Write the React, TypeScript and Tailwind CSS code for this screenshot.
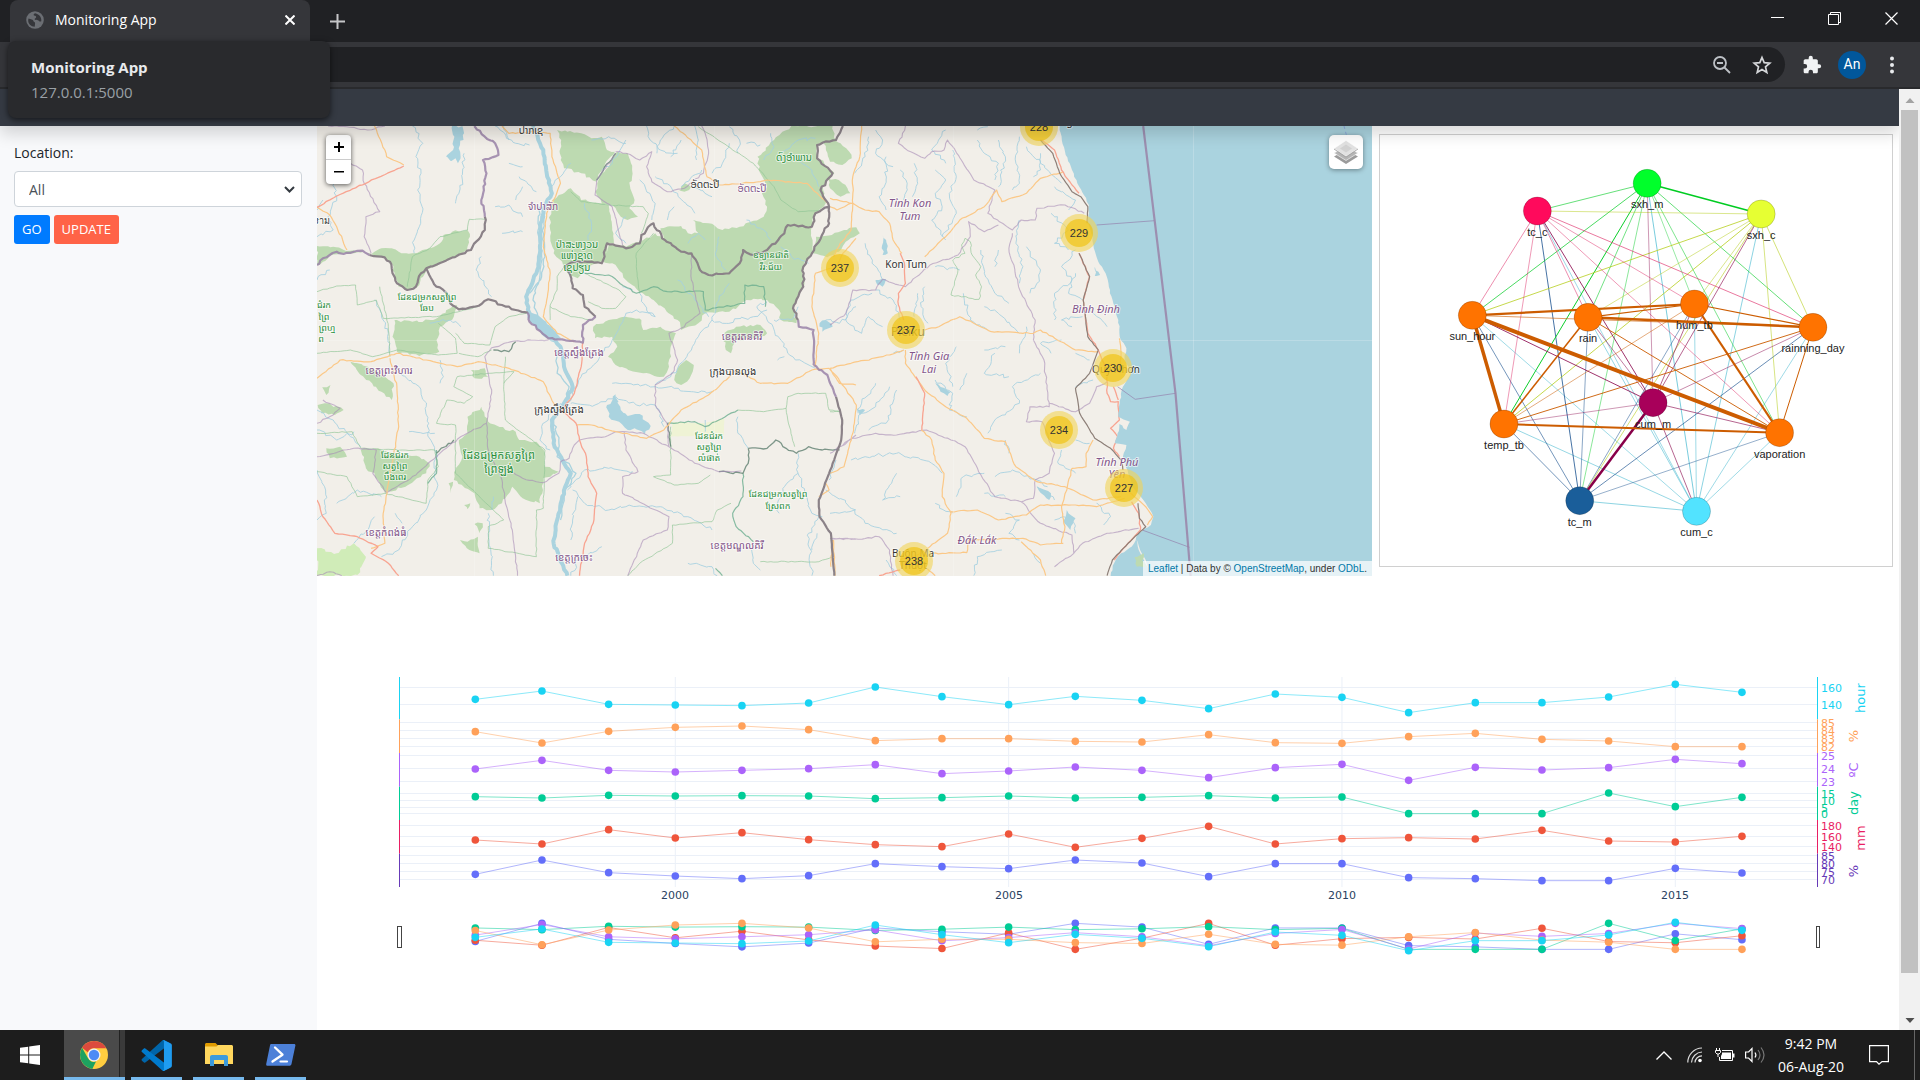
import React from "react";

/* ---------- map geometry ---------- */

type Side = "L" | "R";

// Converts a traced point to the map's own 1056 x 450 space.
const toMap = (side: Side, x: number, y: number): [number, number] =>
  side === "L" ? [x / 2.9037 - 1, y / 3 - 6] : [x / 2.851 + 513, y / 3 - 6];

let seed = 7;
const rnd = () => {
  seed = (seed * 16807) % 2147483647;
  return seed / 2147483647 - 0.5;
};

// Turns a list of points into a path, roughened so that borders and rivers meander.
const trace = (side: Side, pts: string, amp = 1.6, close = false) => {
  let p = pts.trim().split(/\s+/).map((s) => {
    const [x, y] = s.split(",").map(Number);
    return toMap(side, x, y);
  });
  if (close) p = [...p, p[0]];
  if (amp > 0) {
    const out: [number, number][] = [p[0]];
    for (let i = 1; i < p.length; i++) {
      const [x0, y0] = p[i - 1];
      const [x1, y1] = p[i];
      const len = Math.hypot(x1 - x0, y1 - y0);
      const n = Math.max(1, Math.round(len / 3.5));
      for (let k = 1; k < n; k++) {
        out.push([x0 + ((x1 - x0) * k) / n + rnd() * 2 * amp, y0 + ((y1 - y0) * k) / n + rnd() * 2 * amp]);
      }
      out.push(p[i]);
    }
    p = out;
  }
  return "M" + p.map(([x, y]) => `${x.toFixed(1)} ${y.toFixed(1)}`).join("L") + (close ? "Z" : "");
};

const many = (side: Side, list: string[], amp?: number, close?: boolean) =>
  list.map((l) => trace(side, l, amp, close)).join("");

const sea = trace(
  "R",
  "655,18 661,60 672,105 690,150 705,190 724,225 738,255 735,300 745,340 752,385 765,425 780,450 792,480 798,520 812,560 822,600 826,650 845,685 840,720 858,760 835,800 826,850 822,890 855,905 845,930 825,912 820,940 812,970 845,975 835,1010 850,1060 862,1100 900,1150 922,1190 915,1215 880,1240 860,1280 830,1300 810,1330 800,1368",
  0.7
) + "L1400 450L1400 0Z";

const forests =
  many("L", [
    "3,378 50,380 100,392 160,403 170,395 190,385 215,385 240,395 280,400 330,385 360,370 370,345 395,335 440,330 447,350 440,380 430,395 385,418 340,440 320,450 300,495 270,510 240,500 228,470 220,430 190,410 150,400 110,400 70,402 40,405 10,435 3,435",
    "700,30 730,35 770,40 800,55 830,50 845,90 868,95 840,130 815,185 770,160 720,145 708,100 712,60",
    "875,95 905,100 918,150 912,200 925,240 910,265 935,290 905,300 885,290 860,255 830,250 812,215 820,180 850,140",
    "680,250 705,225 740,205 770,240 850,255 860,330 865,370 845,375 835,425 800,435 780,450 760,475 735,465 720,440 715,425 690,400 680,330",
    "850,375 900,380 950,360 985,340 1010,355 1000,325 1060,318 1080,340 1110,340 1095,300 1140,310 1180,330 1230,320 1300,290 1310,260 1295,220 1310,200 1290,160 1282,110 1330,60 1380,18 1500,18 1510,60 1455,75 1455,110 1505,160 1470,200 1480,250 1450,280 1440,320 1440,400 1415,440 1415,500 1385,560 1395,610 1350,600 1345,570 1310,540 1250,540 1200,575 1130,580 1110,610 1060,630 1050,600 980,540 940,515 900,480 890,460 860,430 835,425",
    "228,600 280,605 340,600 390,565 410,555 400,590 360,620 350,660 358,695 300,708 235,695 222,650",
    "805,620 850,600 900,590 945,600 950,630 1000,620 1045,640 1030,680 1025,740 1010,770 950,760 870,735 848,710 875,680 860,650 810,655",
    "1050,745 1075,720 1097,735 1085,775 1060,795 1040,780",
    "1185,640 1220,620 1290,615 1310,640 1270,655 1220,660 1205,700 1190,690",
    "440,890 480,860 500,905 550,930 580,935 590,960 640,965 665,1000 665,1040 705,1055 660,1075 650,1150 600,1135 570,1100 540,1150 510,1170 475,1165 460,1120 400,1080 405,1050 425,1010 415,960 440,940",
    "130,990 180,985 250,1010 300,1010 330,1030 320,1060 260,1100 200,1120 170,1060 145,1045",
    "100,725 150,740 200,770 225,790 220,840 190,815 130,765",
    "30,985 70,980 90,1010 40,1015",
    "18,802 42,795 30,825",
    "418,1260 440,1265 470,1250 475,1300 445,1290",
    "460,1212 484,1210 475,1240",
    "430,1155 448,1150 440,1168",
    "385,1090 398,1085 390,1120",
    "5,855 30,850 80,870 55,885 15,880",
    "450,750 490,745 500,770 460,775",
    "1050,215 1070,190 1090,200 1070,215",
  ], 1.3, true) +
  many("R", [
    "-20,60 5,55 30,70 55,95 62,115 35,135 0,125",
    "-5,175 25,180 50,205 58,220 30,230 0,205",
    "5,345 40,330 75,322 85,340 45,365 25,395 -8,412 -50,400 -40,350",
  ], 1, true);

const borders = many("L", [
  "155,405 190,410 215,425 222,460 235,490 265,510 290,500 305,460 320,445 350,500 380,520 390,550 415,568 460,560 500,538 540,555 580,570 615,578",
  "812,590 780,560 775,525 745,505 738,465 722,440 750,425 830,430 845,370 900,385 940,370 945,345 980,310 1005,355 1060,395 1090,400 1115,450 1140,465 1200,460 1235,420 1240,390 1270,405 1310,390 1360,340 1370,315 1440,320 1450,280 1490,260 1465,210 1500,160 1455,115 1455,75 1510,60 1530,18",
  "320,445 370,425 450,390 490,330 490,290",
  "1490,260 1490,310 1440,400 1415,440 1415,500 1385,565 1400,600",
], 1.1) + trace("L", "1510,830 1528,900 1525,960 1490,1060 1460,1140 1462,1190 1495,1240 1505,1367", 0.3);

const purpleBorders =
  many("L", [
    "490,290 480,240 495,160 485,120 530,105 520,70 490,50 460,18",
    "615,578 620,605 675,655 775,668 775,615 812,590",
    "1400,600 1402,620 1445,630 1445,735",
    "1445,735 1485,765 1510,830",
    "3,435 20,415 40,405 60,395 80,402 110,395 135,392 155,405",
  ], 0.9) + trace("R", "893,18 925,295 985,820 1015,1200 1028,1368", 0);

const admin =
  many("L", [
    "100,130 135,150 140,190 185,275 145,290 140,350 160,400",
    "35,18 90,20 150,30 200,18",
    "870,95 900,100 940,120 975,95 960,140 975,185 1020,215 1070,205 1125,160 1140,100 1130,40 1120,18",
    "870,100 815,180 810,225 860,260 880,340 890,375",
    "510,683 490,710 500,760 510,820 495,910 430,945 370,990 290,1065 205,1118 165,1060 175,990 110,985 3,1010",
    "510,683 575,663 675,660",
    "495,910 500,990 540,1080 550,1150 570,1230 585,1367",
    "545,1045 600,1075 660,1088 705,1060 710,1025 735,1015 745,985 765,960 840,950 870,935 950,940 1025,980",
    "895,935 900,990 935,1055 890,1070 890,1120 1025,1190 1020,1230 950,1260 905,1367",
    "1090,400 1090,480 1115,580 1060,625 1025,640 1050,720 1035,760 985,795 985,855 1020,910 1025,980 1100,1030 1170,1055 1235,1053",
    "3,910 50,885 70,865 20,840",
    "3,1367 40,1355 75,1367",
    "1568,945 1530,975",
    "1500,1255 1568,1258",
  ], 0.7) +
  many("R", [
    "215,18 195,70 230,95 270,115 290,95 325,90 335,60 350,80 380,130 410,180 470,210 450,280 520,330 545,300 585,300 590,265 670,255 725,280",
    "480,315 440,335 395,305 400,350 365,405 285,435 215,500 150,478 130,510 65,510 45,580 0,615",
    "520,340 510,385 545,520 585,600 580,660 610,720 625,860 570,860 560,905 605,905 640,1000 625,1060 585,1080 580,1135 545,1145 470,1130 435,1075 410,1025 385,980 345,960 275,930 190,945 130,940 65,955 0,1000",
    "625,850 700,875 740,850 760,800 790,785",
    "545,1145 600,1210 690,1245 695,1300 640,1340",
    "695,1300 720,1270 790,1240 880,1225",
    "0,1255 80,1258 140,1250 170,1290 180,1367",
  ], 0.8);

const parks =
  many("L", [
    "490,298 445,298 440,330 360,350 330,385 280,410 265,500",
    "3,515 60,498 115,495 120,555 175,540 195,595 350,590 470,560",
    "3,700 100,690 165,710 235,690 355,705 410,700 405,655 355,610",
    "405,640 430,670 505,675 520,620 560,590 610,580",
    "415,700 470,710 510,690",
    "550,710 545,800 550,900 665,990 660,1165 640,1170 640,1310 500,1285 500,1220 545,1200 405,1060 405,915 350,910 380,840 430,850 455,830 400,800 410,770 500,760 575,755 545,790",
    "680,600 680,555 700,510 700,470 720,440",
    "680,560 740,590 805,600",
    "790,545 830,565 870,565 900,530 880,510 780,460",
    "980,340 930,400 930,440 940,520",
    "1110,20 1270,130 1330,200 1350,240 1400,275 1470,270",
    "740,215 770,245 850,255 950,260 965,280 945,340",
    "1030,920 1030,1065 980,1070 1040,1095 1110,1090 1145,1065",
    "905,1367 940,1330 1035,1270 1035,1215 1150,1205 1165,1170 1205,1150",
    "1225,870 1300,875 1365,865 1370,900 1390,980",
    "1365,865 1370,830 1400,820 1480,820 1490,870 1520,875",
    "1290,1325 1460,1325 1500,1310",
    "3,1055 90,1070 120,1130 200,1120 320,1150 325,1080 355,1040 345,990",
    "3,940 105,935 130,985 250,990 345,990",
    "215,710 210,620 185,500",
  ], 0.5) +
  many("R", ["385,355 400,365 405,405 430,440 415,465 432,500 425,538 345,525 355,485 365,450 350,420 385,400 375,375 385,355", "0,875 30,875"], 0.8);

const darkParks = many("L", [
  "1255,985 1310,985 1335,960 1365,985 1395,1000 1430,980 1470,990 1520,990",
  "1255,985 1255,1030 1240,1060 1170,1055",
  "515,690 560,695 580,665",
  "1020,910 1030,980",
  "870,100 815,180",
  "400,960 350,1000",
], 1);
const tealParks = many("L", [
  "1240,1060 1240,1130 1210,1180 1220,1220 1270,1265",
  "780,460 850,465 930,520 980,500 1020,515 1125,515 1130,570 1245,550 1245,495 1300,500 1305,560",
  "1020,910 1100,905 1130,920 1170,900 1225,870",
  "350,990 350,1060 325,1090",
  "1160,1345 1180,1367",
], 0.8);

const rivers =
  many("L", [
    "45,180 60,230 35,290 50,330 3,350",
    "280,18 310,70 290,110 305,160 295,210 308,260 300,320 285,360 285,400",
    "430,100 425,180 415,220 405,250",
    "520,18 580,70 620,75",
    "545,18 560,60", "960,18 970,60 1000,90 1050,100",
    "1100,18 1110,60 1105,120", "1060,60 1030,110", "1040,18 1000,60 990,100",
    "1120,150 1060,200", "1200,70 1180,130 1150,160", "1200,20 1230,60 1225,100",
    "1300,120 1330,80 1320,40", "900,60 880,95 860,130 830,150",
    "940,180 985,250 975,300", "985,170 1050,220 1100,280",
    "900,290 870,340 900,370", "1100,200 1150,230", "1250,70 1290,75",
    "480,410 465,450 510,530", "520,260 560,255 600,290", "540,340 600,335",
    "600,200 580,240", "590,170 640,215", "560,130 600,140",
    "1310,545 1280,560 1310,600 1350,660 1370,700 1450,745",
    "1310,570 1270,590 1180,610 1150,600 1110,650 1090,690 1070,720 1030,770 985,795",
    "1330,600 1380,600 1400,560", "1250,300 1300,330 1320,360", "1170,350 1160,400 1190,450",
    "1040,260 1020,300", "1080,370 1110,340 1130,360",
    "985,590 930,570 900,580 860,660 820,720 770,770 730,850",
    "940,520 960,570 985,590", "890,500 920,510",
    "1150,815 1090,815 1040,805 985,800 900,790 860,790",
    "985,855 930,855 870,830 810,855 740,850",
    "1010,920 1000,880 985,855",
    "655,920 650,960 680,990", "655,920 680,880 710,850",
    "230,740 245,760 300,800 320,860 325,940 350,1000 345,1060 350,1110 320,1170 280,1220 240,1290 190,1310",
    "215,700 210,640 190,580 170,540", "270,935 345,940",
    "3,870 50,900 100,950 130,980", "3,930 60,960 110,935",
    "3,1050 25,1100 30,1180 3,1200", "60,1150 120,1110 190,1130",
    "110,1270 150,1230 170,1190", "230,1180 250,1210",
    "360,720 370,770 360,790", "330,610 390,600 420,620",
    "730,1110 780,1050 850,1045 920,1055",
    "745,1110 780,1150 850,1170 900,1160 1000,1160 1080,1190 1150,1230",
    "760,1130 745,1200 740,1260", "740,1367 760,1320 830,1280",
    "500,1180 500,1240 515,1367", "510,1170 515,1130",
    "1225,890 1225,940 1255,985", "1400,1000 1400,1060 1420,1120 1440,1180 1470,1190",
    "1400,1060 1360,1100 1340,1150 1345,1180", "1460,1190 1430,1240 1440,1367", "1455,1240 1440,1290",
    "1480,1110 1568,1170", "1480,600 1520,610 1568,560",
    "1290,1350 1270,1330 1265,1290", "1130,900 1130,935", "1080,1330 1150,1340 1165,1367",
    "1340,720 1360,710", "1490,1080 1510,1020", "1400,120 1440,150 1460,200", "1350,100 1400,60 1450,55",
    "1200,490 1170,540 1150,600", "1050,480 1100,540 1140,590", "20,240 3,270", "3,480 40,450",
    "800,60 850,50 900,70", "740,130 710,170 680,200", "1430,430 1380,410 1350,380", "780,250 800,310 790,360",
  ], 1.7) +
  many("R", [
    "130,30 150,60 130,100 180,140", "110,50 100,110 70,160", "160,110 160,180 140,230 160,270",
    "200,150 220,190 210,240", "240,130 250,190 235,230", "300,150 330,180 300,220 320,260 290,300 330,360",
    "330,30 290,90 330,130", "350,90 360,170 340,220 360,280 320,350",
    "420,60 440,100 480,130 470,180", "480,60 500,110 480,200", "540,50 530,130 540,190 520,210",
    "560,80 600,130 660,190", "600,100 600,150 580,170", "420,30 450,20", "640,200 700,240 680,270",
    "540,300 530,370 550,440 540,490", "560,380 600,450 590,490 570,520",
    "630,280 680,330 640,370 680,390", "700,390 660,440 690,480 640,520 640,600",
    "700,460 680,520 720,540", "690,620 660,600 720,590", "430,390 440,460 470,520 510,550",
    "480,390 470,440", "300,440 370,450", "270,500 260,560 280,610", "150,480 120,430 100,370",
    "120,520 60,540 45,600 90,640 110,590 150,620", "200,600 180,540 130,510",
    "250,520 240,590", "380,520 400,600 450,630", "440,560 480,580 540,640",
    "470,700 440,760 510,770", "440,690 500,680", "560,620 540,700", "300,780 350,820 340,870 390,890",
    "360,680 330,730 350,800", "390,760 370,810", "170,800 130,860 90,880 70,940",
    "190,810 160,910 110,930", "130,790 90,850 80,880", "600,760 520,800 540,850 470,900 450,940",
    "630,700 600,670 660,660", "750,780 700,800", "660,990 650,1030 700,1060", "590,1100 640,1140",
    "0,1180 70,1170 100,1210 190,1240", "100,1010 190,1000 290,1030 320,1060",
    "100,1010 60,1020", "200,1130 150,1140 190,1060", "470,1070 520,1050 590,1080 620,1100",
    "440,1120 500,1130", "360,1130 380,1070 440,1060", "640,1200 690,1190 700,1240",
    "500,1180 540,1200 510,1240 540,1260", "410,1367 420,1310 490,1290", "350,1180 300,1150",
    "500,960 510,1000", "700,960 740,970", "760,1150 800,1190 780,1215", "190,1367 160,1320",
    "600,1330 580,1300", "180,700 210,690", "740,570 790,620", "700,700 740,720",
  ], 1.7);

const mekong = trace("L", "630,18 660,90 670,160 685,220 660,270 650,340 650,400 640,460 610,530 620,590 670,640 710,680 720,740 745,800 720,850 685,900 690,970 720,1030 740,1060 715,1130 700,1200 690,1270 730,1367", 0.9);
const mekongThin = many("L", [
  "650,260 645,330 655,400 650,470 630,540 650,600 700,640",
  "665,270 660,340 665,410 655,470 620,520",
  "700,690 700,760 735,800 720,850",
  "690,900 705,960 700,1010 735,1030 755,1060 720,1120 710,1200",
], 1.2);
const lakes =
  many("L", [
    "395,18 425,18 430,40 418,75 420,110 412,130 405,115 390,122 378,110 398,90 402,50",
    "845,855 870,823 885,870 905,888 940,882 972,918 955,942 925,925 905,930 880,905 850,890",
    "612,570 650,590 690,630 712,655 670,655 622,605",
    "1462,610 1480,600 1500,620 1470,635",
  ], 1.6, true) +
  many("R", [
    "150,345 160,360 165,400 150,405", "130,480 160,478 150,500 135,495", "300,790 345,815 335,828 315,815",
    "675,1170 700,1195 685,1230 668,1210", "590,1100 630,1120 625,1140 600,1118", "75,865 100,870 85,885",
    "755,440 770,465 755,468",
  ], 1.2, true);

const orangeRoads =
  many("L", [
    "170,18 200,90 205,110 255,135", "3,262 40,285 60,320 90,390",
    "540,18 560,40 640,35 680,40 685,110 710,190 690,240 670,280 660,380 680,460 670,540 660,590 700,640 750,665",
    "1040,18 1120,90 1135,170 1170,195 1290,185 1310,180 1425,190 1490,255",
    "3,775 70,720 160,725 235,700 320,720 410,740 470,725 560,745 660,785 690,850 720,880",
    "215,715 235,800 240,920 225,1010 210,1090 195,1180 200,1270 160,1285",
    "755,915 800,915 850,930 960,955 1010,930 1060,870 1130,830 1170,800 1220,750 1290,790 1370,790 1440,750 1490,745 1520,790 1568,795",
    "1568,355 1530,400 1510,440 1450,460 1440,560 1460,640 1450,740",
    "1460,1130 1490,1110 1480,1090", "1500,1260 1495,1340",
  ], 0.6) +
  many("R", [
    "90,18 85,110 65,170 65,250 60,330 25,380 10,410",
    "0,235 65,250 100,270 140,275 170,310 180,360 205,400",
    "0,260 20,270 60,250", "665,155 600,175 560,220 490,245 475,210 440,260 370,300 330,350 270,410",
    "270,630 310,620 370,590 410,610 460,635 580,640 600,630 700,690 765,695",
    "215,690 215,730 250,780 280,820 330,860 390,895 440,955 500,965 530,1040 590,1085 670,1100 750,1140 830,1130",
    "0,745 60,730 150,710 210,690", "0,745 40,800 75,855 65,940 40,1040 0,1060",
    "260,930 290,960 300,1020 325,1060 320,1130 345,1180 335,1240 260,1300 200,1320",
    "345,1175 420,1170 480,1200 560,1185 600,1155 700,1155 760,1160 840,1135",
    "690,1045 730,1040 730,1000 750,960", "690,1045 675,1110 660,1160 670,1220 660,1270",
    "290,1300 390,1298 395,1260 550,1255 600,1275 665,1270", "545,1265 600,1320 615,1367",
    "845,1110 900,1160 920,1190 905,1215", "825,655 830,700 825,750", "10,1260 15,1367", "270,1340 300,1367",
  ], 0.6);

const redRoads =
  many("L", [
    "3,262 60,228 255,138",
    "775,668 770,740 750,820 715,870 755,910 765,960 785,1010 790,1070 815,1120 805,1210 780,1270 765,1367",
    "3,1140 20,1190 55,1240 120,1250 180,1280 160,1300 210,1330 240,1367",
  ], 0.5) +
  many("R", [
    "605,60 640,90 660,150 690,195 710,220",
    "200,400 212,430 215,490 195,520 195,555 210,600",
    "245,770 270,820 262,930", "710,400 740,470 722,540 735,640 765,690 790,760 790,820 800,845 822,845 825,900 800,925 820,950 808,985 825,1010",
    "808,800 822,840", "860,1145 880,1180 885,1230 850,1270 810,1320", "140,1367 200,1350",
  ], 0.5);

const railway = many("R", [
  "600,60 635,100 655,160 690,215 715,230 735,260 733,310",
  "710,400 740,470 722,540 735,650 765,690",
  "765,690 740,760 700,805 712,880 755,955 800,985 830,1020 835,1050",
  "878,1150 882,1195 900,1220 850,1270 805,1320 790,1367",
], 0.3);

/* ---------- map labels ---------- */

type Label = [Side, number, number, string, string?];
const GREEN = "#2a8f3c";
const PURPLE = "#83558a";
const DARK = "#333";

const localLabels: Label[] = [
  ["L", 623, 30, "ປາກເຊ", DARK],
  ["L", 660, 258, "ຈຳປາສັກ", PURPLE],
  ["L", 1130, 192, "ອັດຕະປື", DARK],
  ["L", 1266, 205, "ອັດຕະປື", PURPLE],
  ["L", 1387, 112, "ດົງອຳພານ", GREEN],
  ["L", 757, 372, "ປ່າສະຫງວນ", GREEN],
  ["L", 757, 405, "ແຫ່ງຊາດ", GREEN],
  ["L", 757, 440, "ເຊປຽນ", GREEN],
  ["L", 212, 750, "ខេត្តព្រះវិហារ", PURPLE],
  ["L", 764, 695, "ខេត្តស្ទឹងត្រែង", PURPLE],
  ["L", 1237, 649, "ខេត្តរតនគិរី", PURPLE],
  ["L", 1210, 753, "ក្រុងបានលុង", DARK],
  ["L", 705, 867, "ក្រុងស្ទឹងត្រែង", DARK],
  ["L", 203, 1235, "ខេត្តកំពង់ធំ", PURPLE],
  ["L", 1222, 1276, "ខេត្តមណ្ឌលគិរី", PURPLE],
  ["L", 750, 1311, "ខេត្តក្រចេះ", PURPLE],
];
const parkLabels: Label[] = [
  ["L", 1322, 403, "ឧទ្យានជាតិ", GREEN],
  ["L", 1322, 437, "វីរៈជ័យ", GREEN],
  ["L", 321, 528, "ដែនជម្រកសត្វព្រៃ", GREEN],
  ["L", 321, 561, "ឆែប", GREEN],
  ["L", 22, 552, "ជំរក", GREEN],
  ["L", 22, 587, "ព្រៃ", GREEN],
  ["L", 32, 621, "ព្រហ្ម", GREEN],
  ["L", 14, 654, "ព", GREEN],
  ["L", 18, 300, "ราม", DARK],
  ["L", 230, 1002, "ដែនជំរក", GREEN],
  ["L", 230, 1036, "សត្វព្រៃ", GREEN],
  ["L", 230, 1069, "បឹងពេរ", GREEN],
  ["L", 1142, 944, "ដែនជំរក", GREEN],
  ["L", 1142, 978, "សត្វព្រៃ", GREEN],
  ["L", 1142, 1010, "លំផាត់", GREEN],
  ["L", 1342, 1120, "ដែនជម្រកសត្វព្រៃ", GREEN],
  ["L", 1342, 1154, "ស្រែពក", GREEN],
];
const bigLabels: Label[] = [
  ["L", 531, 1006, "ដែនជម្រកសត្វព្រៃ", GREEN],
  ["L", 531, 1047, "ព្រៃឡង់", GREEN],
];
const provinces: Label[] = [
  ["R", 229, 249, "Tỉnh Kon"],
  ["R", 229, 288, "Tum"],
  ["R", 758, 567, "Bình Định"],
  ["R", 282, 709, "Tỉnh Gia"],
  ["R", 282, 747, "Lai"],
  ["R", 818, 1025, "Tỉnh Phú"],
  ["R", 818, 1062, "Yên"],
  ["R", 418, 1261, "Đắk Lắk"],
];
const cities: Label[] = [
  ["R", 217, 432, "Kon Tum"],
  ["R", 815, 746, "Quy Nhơn"],
  ["R", 238, 1300, "Buôn Ma"],
  ["R", 238, 1335, "Thuột"],
  ["R", 683, 4, "Ngãi"],
];

const MapText = ({ items, className }: { items: Label[]; className: string }) => (
  <g textAnchor="middle" stroke="#fff" strokeOpacity={0.6} strokeWidth={2} paintOrder="stroke" className={className}>
    {items.map(([s, x, y, t, c], i) => {
      const [mx, my] = toMap(s, x, y);
      return (
        <text key={i} x={Math.round(mx)} y={Math.round(my) + 4} fill={c}>
          {t}
        </text>
      );
    })}
  </g>
);

const clusters: [number, number, number][] = [
  [596, 22, 228],
  [710, 339, 229],
  [28, 445, 237],
  [216, 631, 237],
  [806, 744, 230],
  [654, 930, 234],
  [838, 1104, 227],
  [240, 1323, 238],
];

function MapPanel() {
  return (
    <section aria-label="Map" className="relative h-[450px] flex-1 overflow-hidden bg-[#f2efe9]">
      <svg viewBox="0 0 1056 450" preserveAspectRatio="xMinYMin slice" className="block h-full w-full" fill="none" strokeLinejoin="round">
        <path d={forests} fill="#bddab1" />
        <path d={trace("L", "3,1285 60,1300 110,1270 145,1310 120,1365 3,1367", 1.5, true)} fill="#d0ecb8" />
        <path d={trace("L", "1035,905 1130,910 1185,895 1185,945 1030,950", 0.5, true)} fill="#eff3d5" />
        <path d={rivers} stroke="#a5d0e0" strokeWidth={1} opacity={0.85} />
        <path d={mekongThin} stroke="#aad3df" strokeWidth={1.3} />
        <path d={mekong} stroke="#aad3df" strokeWidth={4} />
        <path d={lakes} fill="#aad3df" />
        <path d={parks} stroke="#8fc495" strokeWidth={1} opacity={0.65} />
        <path d={tealParks} stroke="#6cae90" strokeWidth={1.2} opacity={0.8} />
        <path d={darkParks} stroke="#5f8070" strokeWidth={1.3} opacity={0.8} />
        <path d={admin} stroke="#a78bb5" strokeWidth={1.1} opacity={0.6} />
        <path d={orangeRoads} stroke="#fbc887" strokeWidth={1.2} />
        <path d={redRoads} stroke="#f8a491" strokeWidth={1.3} />
        <path d={sea} fill="#aad3df" />
        <path d={trace("R", "874,1258 884,1290 900,1320 906,1345 895,1320 880,1290", 0.3, true)} fill="#f2efe9" />
        <path d={trace("R", "868,1312 895,1300 890,1322 900,1340 875,1340", 1, true)} fill="#bddab1" />
        <path d="M876.500 0V450M636.500 0V450M157.500 0V450M397.500 0V450M0 214.500H1056" stroke="#fff" opacity={0.2} />
        <path d={many("R", ["760,315 925,302", "820,800 870,838 985,820", "890,1230 1025,1282"], 0)} stroke="#9483ae" strokeWidth={1} opacity={0.7} />
        <path d={railway} stroke="#8d7f78" strokeWidth={1.2} />
        <path d={borders} stroke="#8b8288" strokeWidth={2.2} />
        <path d={purpleBorders} stroke="#9a82a8" strokeWidth={2.2} opacity={0.85} />
        <path d="M1027 0L1035 30" stroke="#8fa9e0" strokeDasharray="3 3" />
        <MapText items={localLabels} className="font-['Noto_Sans_Khmer','Noto_Sans_Lao','DejaVu_Sans','Noto_Sans',sans-serif] text-[10px]" />
        <MapText items={parkLabels} className="font-['Noto_Sans_Khmer','Noto_Sans_Lao','DejaVu_Sans','Noto_Sans',sans-serif] text-[9px]" />
        <MapText items={bigLabels} className="font-['Noto_Sans_Khmer','DejaVu_Sans','Noto_Sans',sans-serif] text-[11px]" />
        <MapText items={provinces} className="fill-[#83558a] font-['Noto_Sans',sans-serif] text-[11px] italic" />
        <MapText items={cities} className="fill-[#333] font-['Noto_Sans',sans-serif] text-[10px]" />
        <MapText items={[["R", 222, 637, "Pleiku"]]} className="fill-[#333] font-['Noto_Sans',sans-serif] text-xs" />
      </svg>

      {clusters.map(([x, y, n], i) => {
        const [mx, my] = toMap("R", x, y);
        return (
          <button
            key={i}
            className="absolute flex size-[38px] -translate-1/2 items-center justify-center rounded-full bg-[#f1d357]/60"
            style={{ left: Math.round(mx), top: Math.round(my) }}
          >
            <span className="flex size-7 items-center justify-center rounded-full bg-[#f0c20c]/65 text-[11px] text-[#333]">{n}</span>
          </button>
        );
      })}

      <div className="absolute top-[9px] left-[9px] flex w-[25px] flex-col overflow-hidden rounded bg-white shadow-[0_1px_5px_rgba(0,0,0,0.65)]">
        <button aria-label="Zoom in" className="flex h-[25px] items-center justify-center border-b border-[#ccc]">
          <svg width="10" height="10" stroke="#000" strokeWidth="2">
            <path d="M5 0v10M0 5h10" />
          </svg>
        </button>
        <button aria-label="Zoom out" className="flex h-6 items-center justify-center">
          <svg width="10" height="2" fill="#000">
            <path d="M0 0h10v1.500h-10z" />
          </svg>
        </button>
      </div>

      <button aria-label="Layers" className="absolute top-[9px] right-[9px] flex size-[34px] items-center justify-center rounded-[5px] bg-white shadow-[0_1px_5px_rgba(0,0,0,0.4)]">
        <svg width="24" height="24" viewBox="0 0 24 24">
          <path d="M12 10L24 16.500 12 24 0 16.500Z" fill="#9b9b9b" />
          <path d="M12 6.500L24 13 12 20.500 0 13Z" fill="#b5b5b5" stroke="#fff" strokeWidth=".6" />
          <path d="M12 0.500L24 8.500 12 16.500 0 8.500Z" fill="#e2e2e2" stroke="#fff" strokeWidth=".6" />
          <path d="M0 9L12 17 24 9" stroke="#999" fill="none" strokeWidth=".8" />
          <path d="M12 4.500L18 8.500 12 12.500 6 8.500Z" fill="#d2d2d2" />
        </svg>
      </button>

      <p className="absolute right-0 bottom-0 bg-white/70 px-[5px] text-[10px] leading-[15px] whitespace-nowrap text-[#333]">
        <a href="#leaflet" className="text-[#0078a8]">Leaflet</a> | Data by © <a href="#osm" className="text-[#0078a8]">OpenStreetMap</a>, under{" "}
        <a href="#odbl" className="text-[#0078a8]">ODbL</a>.
      </p>
    </section>
  );
}

/* ---------- correlation network ---------- */

const raw: Record<string, [number, number, string]> = {
  sxh_m: [783, 160, "#00ff2b"],
  tc_c: [467, 243, "#ff0a5c"],
  sxh_c: [1111, 252, "#e6ff33"],
  sun_hour: [280, 556, "#ff7300"],
  rain: [613, 562, "#ff7300"],
  hum_tb: [919, 522, "#ff7300"],
  rainning_day: [1260, 592, "#ff7300"],
  cum_m: [800, 818, "#a8005a"],
  temp_tb: [371, 882, "#ff7300"],
  vaporation: [1164, 908, "#ff7300"],
  tc_m: [589, 1112, "#1a5e9a"],
  cum_c: [925, 1144, "#52e3ff"],
};
const at = (k: string): [number, number] => [raw[k][0] / 2.877 - 5, raw[k][1] / 3 - 5];

const G = "#00cc22";
const Y = "#b8d020";
const P = "#dd2060";
const O = "#cc5c00";
const B = "#1a5290";
const C = "#42b8d0";
const M = "#880048";

const links: [string, string, string, number, number][] = [
  ["sxh_m", "cum_c", C, 1, 0.7],
  ["sxh_c", "cum_c", C, 1, 0.6],
  ["tc_c", "cum_c", C, 1, 0.5],
  ["sun_hour", "cum_c", C, 1, 0.5],
  ["rain", "cum_c", C, 1, 0.55],
  ["hum_tb", "cum_c", C, 1, 0.5],
  ["rainning_day", "cum_c", C, 1, 0.5],
  ["temp_tb", "cum_c", C, 1, 0.55],
  ["vaporation", "cum_c", C, 1, 0.5],
  ["tc_m", "cum_c", C, 1, 0.6],
  ["tc_c", "tc_m", B, 1, 0.8],
  ["sun_hour", "tc_m", B, 1, 0.6],
  ["rain", "tc_m", B, 1, 0.5],
  ["hum_tb", "tc_m", B, 1, 0.5],
  ["rainning_day", "tc_m", B, 1, 0.65],
  ["temp_tb", "tc_m", B, 1, 0.6],
  ["vaporation", "tc_m", B, 1, 0.45],
  ["sxh_c", "tc_m", Y, 1, 0.6],
  ["sxh_m", "tc_m", G, 1, 0.45],
  ["sxh_m", "tc_c", G, 1, 0.6],
  ["sxh_m", "sun_hour", G, 1, 0.7],
  ["sxh_m", "temp_tb", G, 1, 0.95],
  ["sxh_m", "rain", G, 1, 0.55],
  ["sxh_m", "hum_tb", G, 1, 0.4],
  ["sxh_m", "rainning_day", G, 1, 0.6],
  ["sxh_m", "vaporation", G, 1, 0.5],
  ["sxh_m", "sxh_c", G, 1.5, 1],
  ["sxh_c", "tc_c", Y, 1, 0.5],
  ["sxh_c", "sun_hour", Y, 1, 0.8],
  ["sxh_c", "rain", Y, 1, 0.5],
  ["sxh_c", "hum_tb", Y, 1, 0.5],
  ["sxh_c", "temp_tb", Y, 1, 0.8],
  ["sxh_c", "rainning_day", Y, 1, 0.6],
  ["sxh_c", "vaporation", Y, 1, 0.55],
  ["tc_c", "sun_hour", P, 1, 0.5],
  ["tc_c", "temp_tb", P, 1, 0.45],
  ["tc_c", "rain", P, 1, 0.5],
  ["tc_c", "hum_tb", P, 1, 0.45],
  ["tc_c", "rainning_day", P, 1, 0.6],
  ["tc_c", "vaporation", P, 1, 0.45],
  ["tc_c", "cum_m", M, 1, 0.8],
  ["sxh_m", "cum_m", M, 1, 0.4],
  ["sxh_c", "cum_m", M, 1, 0.6],
  ["hum_tb", "cum_m", M, 1, 0.6],
  ["rain", "cum_m", M, 1, 0.5],
  ["sun_hour", "cum_m", M, 1, 0.8],
  ["temp_tb", "cum_m", M, 1, 0.4],
  ["rainning_day", "cum_m", M, 1, 0.45],
  ["vaporation", "cum_m", M, 1, 0.6],
  ["cum_c", "cum_m", M, 1, 0.6],
  ["cum_m", "tc_m", M, 2.5, 1],
  ["temp_tb", "hum_tb", O, 1, 0.5],
  ["temp_tb", "rainning_day", O, 1, 0.9],
  ["temp_tb", "rain", O, 1.5, 1],
  ["temp_tb", "vaporation", O, 2, 1],
  ["rain", "vaporation", O, 1, 0.9],
  ["rainning_day", "vaporation", O, 1, 1],
  ["hum_tb", "rainning_day", O, 1.2, 1],
  ["hum_tb", "vaporation", O, 2.2, 1],
  ["rain", "hum_tb", O, 1.2, 1],
  ["rain", "rainning_day", O, 2.5, 1],
  ["sun_hour", "rainning_day", O, 1, 0.6],
  ["sun_hour", "hum_tb", O, 2.2, 1],
  ["sun_hour", "temp_tb", O, 3.5, 1],
  ["sun_hour", "vaporation", O, 4, 1],
];

function Network() {
  return (
    <section aria-label="Correlation network" className="mt-2 mr-1.5 ml-[7px] h-[433px] w-[514px] shrink-0 border border-[#d0d0d0]">
      <svg viewBox="0 0 512 431" className="block h-full w-full">
        {links.map(([a, b, c, w, o], i) => {
          const [x1, y1] = at(a);
          const [x2, y2] = at(b);
          return <line key={i} x1={x1} y1={y1} x2={x2} y2={y2} stroke={c} strokeWidth={w} opacity={o} />;
        })}
        {Object.entries(raw).map(([name, [, , fill]]) => {
          const [x, y] = at(name);
          return (
            <g key={name}>
              <circle cx={x} cy={y} r={14} fill={fill} stroke="#000" strokeOpacity={0.18} />
              <text x={x} y={y + 25} textAnchor="middle" fill="#222" className="text-[11px]">
                {name}
              </text>
            </g>
          );
        })}
      </svg>
    </section>
  );
}

/* ---------- time series ---------- */

type Series = { color: string; y: number[]; mini: (v: number) => number };
const series: Series[] = [
  { color: "#636efa", y: [643, 600, 638, 648, 656, 647, 611, 620, 626, 600, 609, 650, 611, 611, 653, 656, 662, 662, 625, 639], mini: (v) => 790 + (v - 600) * 1.26 },
  { color: "#ef553b", y: [540, 552, 509, 534, 518, 539, 554, 560, 522, 562, 535, 499, 552, 536, 533, 537, 511, 543, 546, 529], mini: (v) => 790 + (v - 499) * 1.24 },
  { color: "#00cc96", y: [410, 414, 406, 408, 407, 408, 416, 413, 408, 414, 412, 407, 414, 411, 461, 461, 461, 399, 440, 412], mini: (v) => 790 + (v - 399) * 1.26 },
  { color: "#ab63fa", y: [327, 301, 331, 336, 331, 326, 314, 341, 333, 321, 331, 353, 323, 313, 361, 322, 330, 323, 298, 311], mini: (v) => 790 + (v - 298) * 1.22 },
  { color: "#ffa15a", y: [215, 249, 214, 202, 198, 209, 242, 236, 236, 244, 246, 224, 248, 250, 230, 220, 238, 243, 260, 260], mini: (v) => 790 + (v - 198) * 1.26 },
  { color: "#19d3f3", y: [118, 93, 133, 135, 137, 129, 81, 110, 134, 109, 121, 146, 102, 112, 158, 128, 128, 111, 73, 97], mini: (v) => v + 714 },
];
const sx = (i: number) => 158.3 + i * 66.667;
const sy = (v: number) => v / 3 + 84;

const axes: { color: string; from: number; to: number; ticks: [number, string][]; unit: string; ux: number; uy: number }[] = [
  { color: "#19d3f3", from: 51, to: 178, ticks: [[82, "160"], [132, "140"]], unit: "hour", ux: 1548, uy: 115 },
  { color: "#ffa15a", from: 178, to: 279, ticks: [[187, "85"], [211, "84"], [235, "83"], [259, "82"]], unit: "%", ux: 1541, uy: 229 },
  { color: "#ab63fa", from: 279, to: 380, ticks: [[286, "25"], [325, "24"], [364, "23"]], unit: "ºC", ux: 1541, uy: 330 },
  { color: "#00cc96", from: 380, to: 480, ticks: [[400, "15"], [421, "10"], [442, "5"], [460, "0"]], unit: "day", ux: 1541, uy: 428 },
  { color: "#e91e63", from: 480, to: 581, ticks: [[496, "180"], [529, "160"], [559, "140"]], unit: "mm", ux: 1548, uy: 535 },
  { color: "#673ab7", from: 581, to: 681, ticks: [[586, "85"], [610, "80"], [634, "75"], [658, "70"]], unit: "%", ux: 1541, uy: 633 },
];

function TimeSeries() {
  return (
    <section aria-label="Time series" className="w-full">
      <svg viewBox="0 0 1582 453" className="block w-full font-['DejaVu_Sans',sans-serif]">
        <g stroke="#ebf0f8" strokeWidth={1}>
          {axes.flatMap((a) => a.ticks.map(([t]) => <line key={t} x1={83} x2={1500} y1={Math.floor(sy(t)) + 0.5} y2={Math.floor(sy(t)) + 0.5} />))}
          {[3, 8, 13, 18].map((i) => (
            <line key={i} x1={sx(i)} x2={sx(i)} y1={101} y2={311} />
          ))}
        </g>
        {axes.map((a) => (
          <g key={a.from}>
            <path d={`M82.500 ${sy(a.from)}V${sy(a.to)}M1500.500 ${sy(a.from)}V${sy(a.to)}`} stroke={a.color} fill="none" />
            {a.ticks.map(([t, s]) => (
              <text key={t} x={1504} y={Math.round(sy(t)) + 5} fill={a.color} className="text-[11px]">
                {s}
              </text>
            ))}
            <text textAnchor="middle" transform={`translate(${a.ux} ${Math.round(sy(a.uy))}) rotate(-90)`} fill={a.color} className="text-[13px]">
              {a.unit}
            </text>
          </g>
        ))}
        {series.map((s) => (
          <g key={s.color}>
            <polyline points={s.y.map((v, i) => `${sx(i)},${sy(v)}`).join(" ")} fill="none" stroke={s.color} strokeOpacity={0.5} />
            {s.y.map((v, i) => (
              <circle key={i} cx={sx(i)} cy={sy(v)} r={3.8} fill={s.color} />
            ))}
          </g>
        ))}
        {series.map((s) => (
          <g key={s.color}>
            <polyline points={s.y.map((v, i) => `${sx(i)},${sy(s.mini(v))}`).join(" ")} fill="none" stroke={s.color} strokeOpacity={0.5} />
            {s.y.map((v, i) => (
              <circle key={i} cx={sx(i)} cy={sy(s.mini(v))} r={3.8} fill={s.color} />
            ))}
          </g>
        ))}
        {["2000", "2005", "2010", "2015"].map((y, i) => (
          <text key={y} x={Math.round(sx(3 + i * 5))} y={323} textAnchor="middle" fill="#2a3f5f" className="text-[11px]">
            {y}
          </text>
        ))}
        <rect x={80.5} y={350.5} width={4} height={21} fill="#fff" stroke="#444" />
        <rect x={1499.5} y={350.5} width={3} height={21} fill="#fff" stroke="#444" />
      </svg>
    </section>
  );
}

/* ---------- browser chrome ---------- */

function TabStrip() {
  return (
    <header className="flex h-[42px] shrink-0 items-start bg-[#202124] text-white">
      <div className="ml-2.5 flex h-[42px] w-[300px] items-center rounded-t-lg bg-[#35363a] pr-2.5 pb-0.5 pl-4">
        <svg width="18" height="18" viewBox="0 0 18 18">
          <circle cx="9" cy="9" r="8.800" fill="#6b6e73" />
          <path d="M2.500 7.500l4 1.300c1 .4.600 1.800 1.800 2.200 1.300.5.700 1.900.4 4.800C5 15.500 2 13 2.200 9zM9 2.200c-1 .9-1.900 1.300-1 2.300 1.400.4 2.400.3 2.100 1.900-.3 1-2 .9-1.400 2.100 1.300.9 3.300.1 4.300 1.400.7 1 1.300.6 2.300.4.500-3.700-1.600-7-6.300-8.100z" fill="#35363a" />
        </svg>
        <span className="ml-[11px] flex-1 text-[14px] leading-5">Monitoring App</span>
        <button aria-label="Close tab" className="flex size-5 items-center justify-center">
          <svg width="10" height="10" stroke="#fff" strokeWidth="2">
            <path d="M0.500 0.500l9 9M9.500 0.500l-9 9" />
          </svg>
        </button>
      </div>
      <button aria-label="New tab" className="mt-2.5 ml-4 flex size-[22px] items-center justify-center">
        <svg width="15" height="15" stroke="#c5c6c8" strokeWidth="2">
          <path d="M7.500 0v15M0 7.500h15" />
        </svg>
      </button>
      <div className="ml-auto flex h-9 items-center gap-11 pr-[22px]">
        <button aria-label="Minimize">
          <svg width="13" height="13" stroke="#fff">
            <path d="M0 5.500h13" />
          </svg>
        </button>
        <button aria-label="Restore">
          <svg width="13" height="13" stroke="#fff" fill="none">
            <path d="M0.500 2.500h10v10h-10zM2.500 2.500v-2h10v10h-2" />
          </svg>
        </button>
        <button aria-label="Close">
          <svg width="13" height="13" stroke="#fff" strokeWidth="1.200">
            <path d="M0.500 0.500l12 12M12.500 0.500l-12 12" />
          </svg>
        </button>
      </div>
    </header>
  );
}

function Toolbar() {
  return (
    <div className="flex h-[47px] shrink-0 items-center border-b-2 border-[#292a2d] bg-[#35363a] pr-6">
      <div className="ml-28 flex h-[35px] flex-1 items-center justify-end gap-5 rounded-full bg-[#202124] pr-[13px]">
        <button aria-label="Zoom level">
          <svg width="20" height="20" viewBox="0 0 20 20" fill="none" stroke="#bdc1c6" strokeWidth="1.800">
            <circle cx="8" cy="8" r="6" />
            <path d="M5 8h6M12.500 12.500l5.500 5.500" />
          </svg>
        </button>
        <button aria-label="Bookmark this tab">
          <svg width="20" height="20" viewBox="0 0 20 20" fill="none" stroke="#d5d7da" strokeWidth="1.700">
            <path d="M10 2.500l2.200 5.200 5.600.5-4.300 3.700 1.300 5.500L10 14.500l-4.800 2.900 1.300-5.500L2.200 8.200l5.600-.5z" />
          </svg>
        </button>
      </div>
      <button aria-label="Extensions" className="ml-[17px]">
        <svg width="20" height="20" viewBox="0 0 24 24" fill="#f1f3f4">
          <path d="M20.500 11H19V7c0-1.100-.9-2-2-2h-4V3.500a2.500 2.500 0 0 0-5 0V5H4c-1.100 0-2 .9-2 2v3.800h1.500a2.700 2.700 0 0 1 0 5.400H2V20c0 1.100.9 2 2 2h3.800v-1.500a2.700 2.700 0 0 1 5.400 0V22H17c1.100 0 2-.9 2-2v-4h1.500a2.500 2.500 0 0 0 0-5z" />
        </svg>
      </button>
      <button aria-label="Profile" className="ml-4 flex size-[28px] items-center justify-center rounded-full bg-[#01579b] font-['Roboto',sans-serif] text-[14px] text-white">
        An
      </button>
      <button aria-label="Menu" className="ml-[22px]">
        <svg width="8" height="18" fill="#e8eaed">
          <circle cx="4" cy="2.500" r="2" />
          <circle cx="4" cy="9" r="2" />
          <circle cx="4" cy="15.500" r="2" />
        </svg>
      </button>
    </div>
  );
}

function Scrollbar() {
  return (
    <div className="flex w-[21px] shrink-0 flex-col items-center bg-[#f1f1f1]">
      <svg width="10" height="21" fill="#a3a3a3">
        <path d="M0.500 14h9L5 9z" />
      </svg>
      <div className="w-[17px] flex-[863] bg-[#c1c1c1]" />
      <div className="flex-[40]" />
      <svg width="10" height="17" fill="#505050">
        <path d="M0.500 5h9L5 10z" />
      </svg>
    </div>
  );
}

function Sidebar() {
  return (
    <aside className="w-[317px] shrink-0 bg-[#f8f9fb] pt-4 pr-[15px] pl-3.5 text-[#212529]">
      <form onSubmit={(e) => e.preventDefault()}>
        <label htmlFor="location" className="block text-[14px] leading-[22px]">
          Location:
        </label>
        <div className="relative mt-[7px]">
          <select id="location" className="block h-9 w-full appearance-none rounded border border-[#ced4da] bg-white px-3.5 text-[14px] text-[#495057]">
            <option>All</option>
          </select>
          <svg width="11" height="8" viewBox="0 0 11 8" className="pointer-events-none absolute top-[15px] right-[7px]" fill="none" stroke="#343a40" strokeWidth="2">
            <path d="M1 1l4.500 4.500L10 1" />
          </svg>
        </div>
        <div className="mt-2 flex gap-1 text-[13px] text-white">
          <button className="h-[29px] rounded-[3px] bg-[#007bff] px-2">GO</button>
          <button className="h-[29px] rounded-[3px] bg-[#ff6347] px-2">UPDATE</button>
        </div>
      </form>
    </aside>
  );
}

/* ---------- taskbar ---------- */

const taskIcons = [
  {
    name: "Visual Studio Code",
    art: (
      <svg width="31" height="31" viewBox="0 0 100 100">
        <path d="M96 11L75 1c-2.400-1.200-5.300-.7-7.200 1.200L3 61c-1.700 1.600-1.700 4.400 0 6l5.500 5c1.500 1.400 3.800 1.500 5.400.2L93 13z" fill="#0065a9" />
        <path d="M96 89L75 99c-2.400 1.200-5.300.7-7.200-1.200L3 39c-1.700-1.600-1.700-4.400 0-6l5.500-5c1.500-1.400 3.800-1.500 5.400-.2L93 87z" fill="#007acc" />
        <path d="M75 99c-2.400 1.200-5.300.7-7.200-1.200 2.300 2.300 6.200.7 6.200-2.600V4.800c0-3.300-3.900-4.900-6.200-2.600C69.700.3 72.600-.2 75 1l21 10c2.200 1 3.600 3.200 3.600 5.600v66.800c0 2.400-1.400 4.600-3.600 5.600z" fill="#1f9cf0" />
      </svg>
    ),
  },
  {
    name: "File Explorer",
    art: (
      <svg width="28" height="24" viewBox="0 0 28 24">
        <path d="M0 1.500C0 .7.700 0 1.500 0h9L13 2.500H27v4H0z" fill="#e09b00" />
        <path d="M0 3.500h11.500L13 2h13.500c.800 0 1.500.7 1.500 1.500V21H0z" fill="#ffd75e" />
        <path d="M5 14c0-1.100.9-2 2-2h14c1.100 0 2 .9 2 2v9h-4v-6H9v6H5z" fill="#3d9bdc" />
      </svg>
    ),
  },
  {
    name: "PowerShell",
    art: (
      <svg width="30" height="22" viewBox="0 0 30 22">
        <path d="M5 0h23c1 0 1.600.7 1.400 1.600L25.500 20c-.2 1-1.200 1.800-2.200 1.800H1.500C.5 21.800 0 21 .200 20L4 1.500C4.200.6 4.500 0 5 0z" fill="#4c80d8" />
        <path d="M9 3.500l7.500 7.200L6.500 17.500" fill="none" stroke="#fff" strokeWidth="2.300" strokeLinecap="round" strokeLinejoin="round" />
        <path d="M14.500 17.500h6.500" stroke="#fff" strokeWidth="2.200" strokeLinecap="round" />
      </svg>
    ),
  },
];

function Taskbar() {
  return (
    <footer className="flex h-[50px] shrink-0 items-stretch bg-[#1d1d1d] text-white">
      <button aria-label="Start" className="flex w-16 items-center pl-5">
        <svg width="20" height="20" fill="#fff">
          <path d="M0 2.800L8.200 1.700V9.500H0zM9.200 1.500L20 0v9.500H9.200zM0 10.500h8.200v7.800L0 17.200zM9.200 10.500H20V20L9.200 18.500z" />
        </svg>
      </button>
      <button aria-label="Google Chrome" className="flex w-[61px] border-b-[3px] border-[#76b9ed] bg-[#3a3a3a]">
        <span className="flex h-full w-14 items-center justify-center border-r border-[#222] bg-[#4a4a4a] pt-[3px] pl-1">
          <svg width="28" height="28" viewBox="0 0 28 28">
            <circle cx="14" cy="14" r="14" fill="#ffcd40" />
            <path d="M14 0a14 14 0 0 1 12.300 7.300H14a7 7 0 0 0-6.200 4L2.100 6.700A14 14 0 0 1 14 0z" fill="#dc4a3d" />
            <path d="M2.100 6.700L8 17.300a7 7 0 0 0 8 3.300L12.300 27.900A14 14 0 0 1 2.100 6.700z" fill="#1da260" />
            <circle cx="14" cy="14" r="6.500" fill="#f1f1f1" />
            <circle cx="14" cy="14" r="5.200" fill="#4c8bf5" />
          </svg>
        </span>
      </button>
      <div className="ml-1.5 flex gap-[11px]">
        {taskIcons.map((t) => (
          <button key={t.name} aria-label={t.name} className="flex w-[51px] items-center justify-center border-b-[3px] border-[#76b9ed] pt-[3px]">
            {t.art}
          </button>
        ))}
      </div>
      <div className="ml-auto flex items-center">
        <svg width="16" height="9" fill="none" stroke="#fff" strokeWidth="1.300">
          <path d="M0.500 8.500L8 1l7.500 7.500" />
        </svg>
        <svg width="16" height="16" className="ml-[15px]" fill="none" stroke="#ddd" strokeWidth="1.200">
          <path d="M0.800 15.500A14.500 14.500 0 0 1 15 1M4.500 15.500A11 11 0 0 1 15 5M8 15.500A7 7 0 0 1 15 8.800" />
          <circle cx="13" cy="13.500" r="1.800" fill="#fff" stroke="none" />
        </svg>
        <svg width="20" height="14" className="ml-3" fill="none" stroke="#fff">
          <path d="M7 2.500h10.500v10H4.500V9" />
          <path d="M7 4.500h9v6.500H6V8l1-2zM18 5.500h1.500v4H18z" fill="#fff" stroke="none" />
          <path d="M1.500 0v2.500M4.500 0v2.500M0.500 2.500h5v2L4 6H2L0.500 4.500zM3 6v3" />
        </svg>
        <svg width="22" height="18" className="ml-2.5" fill="none" stroke="#fff" strokeWidth="1.200">
          <path d="M0.600 6h3L7 2.500v13L3.600 12h-3z" />
          <path d="M10 6.500q1.800 2.500 0 5" />
          <path d="M13 4q4 5 0 10M16 1.500q6 7.500 0 15" stroke="#777" />
        </svg>
        <div className="ml-2 w-[72px] text-center text-[14px] leading-[23px] whitespace-nowrap">
          <p>9:42 PM</p>
          <p>06-Aug-20</p>
        </div>
        <button aria-label="Notifications" className="ml-[22px]">
          <svg width="20" height="20" fill="none" stroke="#fff" strokeWidth="1.200">
            <path d="M0.600 0.600h18.800v16H13L10 19.200 7.500 16.600H0.600z" />
          </svg>
        </button>
        <div className="ml-[25px] h-full w-1.5 border-l border-[#666]" />
      </div>
    </footer>
  );
}

export default function App() {
  return (
    <div className="relative flex h-screen flex-col overflow-hidden bg-white font-['Segoe_UI','Open_Sans',sans-serif]">
      <TabStrip />
      <Toolbar />
      <div className="flex min-h-0 flex-1">
        <div className="flex min-w-0 flex-1 flex-col overflow-hidden">
          <nav className="relative z-10 h-[37px] shrink-0 bg-[#353a43] shadow-[0_8px_16px_rgba(0,0,0,0.15)]" />
          <div className="flex min-h-0 flex-1">
            <Sidebar />
            <main className="min-w-0 flex-1 font-['Liberation_Sans',sans-serif]">
              <div className="flex">
                <MapPanel />
                <Network />
              </div>
              <TimeSeries />
            </main>
          </div>
        </div>
        <Scrollbar />
      </div>
      <Taskbar />
      <div role="tooltip" className="absolute top-[41px] left-2 z-20 h-[77px] w-[322px] rounded-lg bg-[#292a2d] pt-[15px] pl-[23px] shadow-[0_2px_6px_rgba(0,0,0,0.6)]">
        <p className="text-[15px] leading-[22px] font-bold text-[#e8eaed]">Monitoring App</p>
        <p className="text-[15px] leading-7 text-[#9aa0a6]">127.0.0.1:5000</p>
      </div>
    </div>
  );
}
